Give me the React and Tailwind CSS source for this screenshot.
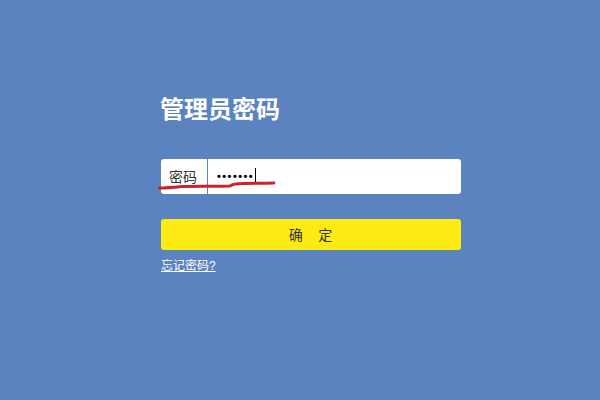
import React from 'react';

const font = { fontFamily: '"Liberation Sans", "Noto Sans CJK SC", sans-serif' };

const App = () => {
    return (
        <div className="w-[600px] h-[400px] bg-[#5b83bf] overflow-hidden" style={font}>
            <div className="ml-[161px] w-[300px] pt-[96px]">
                <h1 className="-ml-px text-[24px] leading-[28px] font-bold text-white">管理员密码</h1>

                <div className="relative mt-[35px] flex h-[35px] items-center rounded-[3px] bg-white">
                    <span className="w-[47px] h-full border-r border-[#5b83bf] pl-[8px] text-[14px] leading-[37px] text-[#333]">
                        密码
                    </span>
                    <span className="ml-[9px] text-[11px] font-bold tracking-[1.45px] text-black">•••••••</span>
                    <span className="ml-[1px] h-[15px] w-px -translate-y-[1px] bg-black" />

                    {/* red pen mark across the field */}
                    <svg className="absolute left-[-3px] top-[18px]" width="120" height="14" viewBox="0 0 120 14" fill="none">
                        <path
                            d="M1 11C8 11 14 10.5 24 9.5C38 9 56 9.5 72 9C75 7 78 6.5 84 6.5C94 6 106 6.5 116 6"
                            stroke="#d0202c"
                            strokeWidth="2.8"
                            strokeLinecap="round"
                        />
                    </svg>
                </div>

                <button className="mt-[25px] block h-[31px] w-full rounded-[3px] bg-[#ffeb14] pr-px text-[14px] leading-[33px] text-[#333] whitespace-pre">
                    确{'    '}定
                </button>

                <a href="#" className="mt-[8px] block w-fit text-[12px] leading-[16px] text-white underline">
                    忘记密码?
                </a>
            </div>
        </div>
    );
};

export default App;
